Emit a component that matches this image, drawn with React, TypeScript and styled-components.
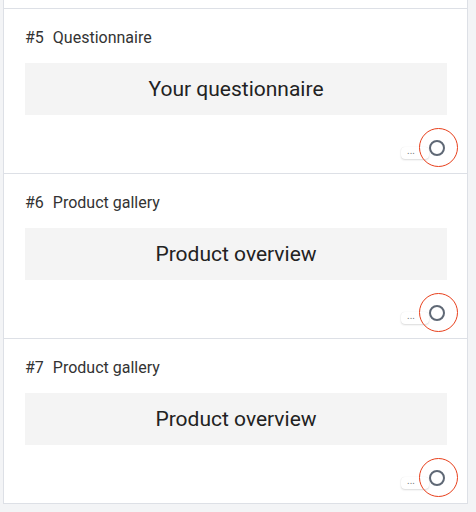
import React from "react";
import styled, { createGlobalStyle } from "styled-components";

const GlobalStyle = createGlobalStyle`
  html, body {
    margin: 0;
    padding: 0;
    background: #f3f4f6;
    font-family: Roboto, "Liberation Sans", Arial, sans-serif;
  }
`;

const Page = styled.div`
  width: 476px;
  height: 512px;
  overflow: hidden;
  box-sizing: border-box;
  padding: 0 8px 0 3px;
`;

const List = styled.div`
  width: 465px;
  box-sizing: border-box;
  background: #fff;
  border-left: 1px solid #dde0e6;
  border-right: 1px solid #dde0e6;
  border-bottom: 1px solid #dde0e6;
`;

const PrevTail = styled.div`
  height: 8px;
`;

const Card = styled.section`
  border-top: 1px solid #dde0e6;
  padding: 20px 20px 0 21px;
  height: 165px;
  box-sizing: border-box;
  display: flex;
  flex-direction: column;
`;

const Title = styled.div`
  font-size: 16px;
  line-height: 18px;
  color: #333;
  display: flex;
  gap: 9px;
`;

const Preview = styled.div`
  margin-top: 16px;
  height: 52px;
  background: #f4f4f4;
  display: flex;
  align-items: center;
  justify-content: center;
  font-size: 21px;
  color: #222;
`;

const Footer = styled.div`
  margin-top: 13px;
  margin-right: -11px;
  height: 39px;
  display: flex;
  align-items: center;
  justify-content: flex-end;
`;

const MoreButton = styled.button`
  border: none;
  background: #fff;
  border-radius: 4px;
  box-shadow: 0 1px 2px rgba(0, 0, 0, 0.14), 0 0 1px rgba(0, 0, 0, 0.1);
  width: 28px;
  height: 12px;
  padding: 0 0 4px 6px;
  margin-top: 10px;
  margin-right: -10px;
  font-size: 10px;
  line-height: 8px;
  color: #777;
  font-family: inherit;
  text-align: left;
`;

const ToggleWrap = styled.div`
  position: relative;
  width: 39px;
  height: 39px;
  display: flex;
  align-items: center;
  justify-content: center;
`;

const Highlight = styled.span`
  position: absolute;
  inset: 0;
  border: 1px solid #e8401c;
  border-radius: 50%;
  box-sizing: border-box;
  pointer-events: none;
`;

const RadioIcon = styled.span`
  width: 16px;
  height: 16px;
  box-sizing: border-box;
  border: 2px solid #5f6875;
  border-radius: 50%;
  margin-left: -3px;
  background: #fff;
`;

type Item = { num: number; kind: string; label: string };

const items: Item[] = [
  { num: 5, kind: "Questionnaire", label: "Your questionnaire" },
  { num: 6, kind: "Product gallery", label: "Product overview" },
  { num: 7, kind: "Product gallery", label: "Product overview" },
];

export default function App() {
  return (
    <>
      <GlobalStyle />
      <Page>
        <List>
          <PrevTail />
          {items.map((it) => (
            <Card key={it.num}>
              <Title>
                <span>#{it.num}</span>
                <span>{it.kind}</span>
              </Title>
              <Preview>{it.label}</Preview>
              <Footer>
                <MoreButton>...</MoreButton>
                <ToggleWrap>
                  <RadioIcon />
                  <Highlight />
                </ToggleWrap>
              </Footer>
            </Card>
          ))}
        </List>
      </Page>
    </>
  );
}
